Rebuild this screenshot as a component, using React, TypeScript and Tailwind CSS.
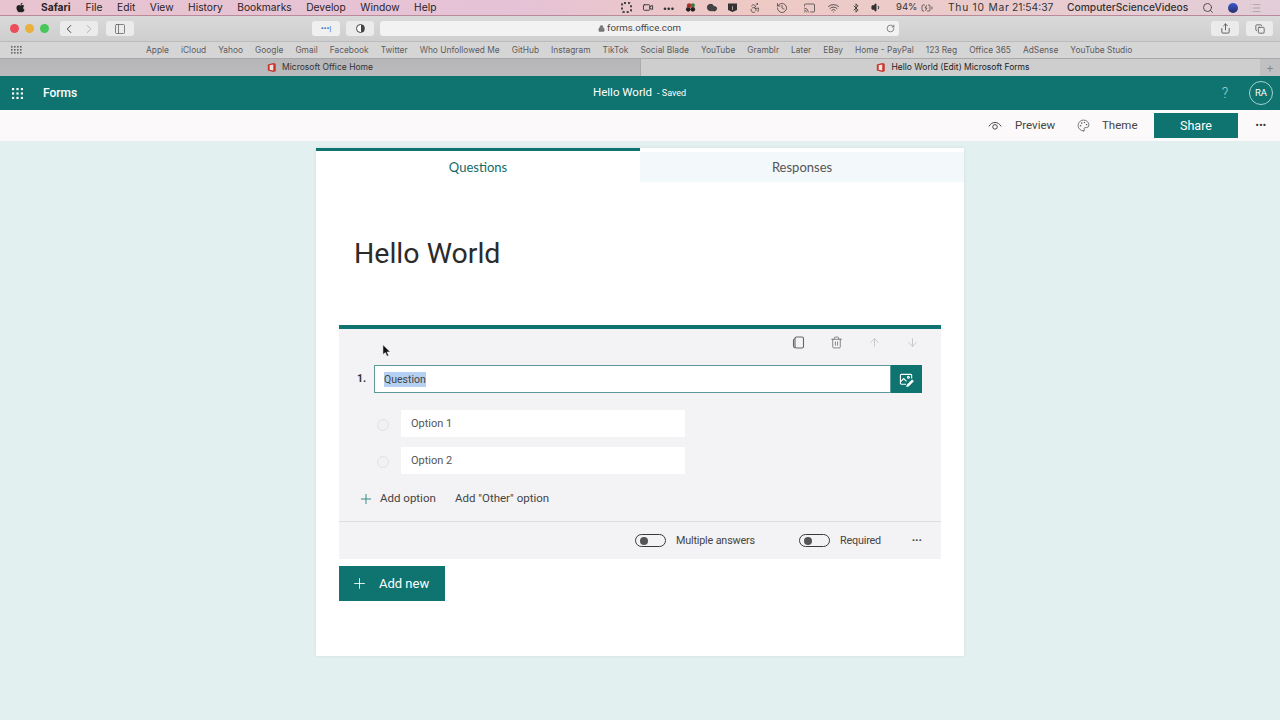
import React from "react";
import {
  ArrowDown, ArrowUp, ChevronLeft, ChevronRight, Copy, History, Lock, Palette, Plus, RotateCw, Search, Share, Trash2, Volume1, Wifi, PanelLeft, Video, Accessibility, Cast, BatteryCharging, List, Cloud, Bluetooth,
} from "lucide-react";
import { FaApple } from "react-icons/fa";

const menus = ["File", "Edit", "View", "History", "Bookmarks", "Develop", "Window", "Help"];
const bookmarks = ["Apple", "iCloud", "Yahoo", "Google", "Gmail", "Facebook", "Twitter", "Who Unfollowed Me", "GitHub", "Instagram", "TikTok", "Social Blade", "YouTube", "Gramblr", "Later", "EBay", "Home - PayPal", "123 Reg", "Office 365", "AdSense", "YouTube Studio"];

function Waffle({ className }: { className: string }) {
  const dots = [];
  for (let y = 0; y < 3; y++) for (let x = 0; x < 3; x++) dots.push(<rect key={x + "-" + y} x={x * 4.5} y={y * 4.5} width="2.2" height="2.2" />);
  return <svg viewBox="0 0 11.2 11.2" className={className} fill="currentColor">{dots}</svg>;
}

function SmallGrid() {
  const dots = [];
  for (let y = 0; y < 3; y++) for (let x = 0; x < 4; x++) dots.push(<rect key={x + "-" + y} x={x * 3} y={y * 3} width="1.6" height="1.6" />);
  return <svg viewBox="0 0 11 8" className="ml-[11px] h-[8px] w-[11px] text-[#666]" fill="currentColor">{dots}</svg>;
}

function OfficeLogo() {
  return (
    <svg viewBox="0 0 12 12" className="h-[11px] w-[10px]">
      <path d="M1 2.5 7.5 0.5 10.5 1.5V10.5L7.5 11.5 1 9.5Z" fill="#c9372c" />
      <path d="M3.2 3.4 7.5 2.4V9.6L3.2 8.6Z" fill="#efe3e0" />
    </svg>
  );
}

function Toggle({ label }: { label: string }) {
  return (
    <div className="flex items-center gap-[10px]">
      <div className="flex h-[13px] w-[31px] items-center rounded-full border border-[#3a3a3a] pl-[4px]">
        <div className="h-[8px] w-[8px] rounded-full bg-[#555]" />
      </div>
      <span className="pt-[1px] text-[10.75px] tracking-[-0.15px] text-[#444]">{label}</span>
    </div>
  );
}

function Option({ label }: { label: string }) {
  return (
    <div className="flex items-center">
      <div className="ml-[38px] mt-[3px] h-[12px] w-[12px] rounded-full border border-[#e2e1e3] bg-[#f1f0f2]" />
      <div className="ml-[12px] flex h-[27px] w-[284px] items-center bg-white pl-[10px] pt-[1px] text-[11px] text-[#555]">{label}</div>
    </div>
  );
}

export default function App() {
  return (
    <div className="relative flex h-[720px] w-[1280px] flex-col overflow-hidden bg-[#e3f0f0] font-['Roboto',sans-serif]">
      {/* macOS menu bar */}
      <div className="flex h-[15px] items-center bg-[linear-gradient(90deg,#e8c4d0_0%,#e5c2d6_40%,#eec9c4_58%,#eccbc9_70%,#e2cdd8_100%)] font-['Inter',sans-serif] text-[10.25px] text-[#2a2226]">
        <FaApple className="ml-[15px] h-[11px] w-[11px] text-[#222]" />
        <span className="ml-[15px] font-bold">Safari</span>
        <div className="ml-[15px] flex gap-[14.5px]">
          {menus.map((m) => <span key={m}>{m}</span>)}
        </div>
        <div className="ml-auto flex items-center text-[#333]">
          <div className="h-[11px] w-[11px] rounded-[3px] border-[2px] border-dotted border-[#444]" />
          <Video className="ml-[10px] h-[11px] w-[12px]" />
          <span className="ml-[9px] w-[12px] text-[8px] font-bold leading-none">•••</span>
          <svg viewBox="0 0 12 12" className="ml-[10px] h-[11px] w-[12px]">
            <circle cx="3" cy="8" r="2.5" fill="#222" />
            <circle cx="8" cy="8" r="2.5" fill="#222" />
            <circle cx="4" cy="4" r="2.6" fill="#a8302c" />
            <circle cx="8" cy="3.5" r="2.2" fill="#3d7a3a" />
          </svg>
          <Cloud className="ml-[9px] h-[11px] w-[12px]" fill="#444" />
          <svg viewBox="0 0 11 11" className="ml-[9px] h-[11px] w-[11px]"><path d="M1 1.5H10V8L5.5 10 1 8Z" fill="#333" /><path d="M5.5 4v4" stroke="#e9c9c9" strokeWidth="0.7" /></svg>
          <Accessibility className="ml-[11px] h-[12px] w-[12px]" strokeWidth={1.4} />
          <History className="ml-[15px] h-[12px] w-[12px]" strokeWidth={1.4} />
          <Cast className="ml-[15px] h-[12px] w-[13px]" strokeWidth={1.4} />
          <Wifi className="ml-[11px] h-[12px] w-[13px]" strokeWidth={1.6} />
          <Bluetooth className="ml-[11px] h-[10px] w-[10px]" />
          <Volume1 className="ml-[10px] h-[11px] w-[11px]" fill="#333" />
          <span className="ml-[14px] w-[18px] whitespace-nowrap text-[9.5px]">94%</span>
          <BatteryCharging className="ml-[4px] h-[12px] w-[18px]" strokeWidth={1.4} />
          <span className="ml-[12px] w-[57px] whitespace-nowrap tracking-[0.75px]">Thu 10 Mar</span>
          <span className="ml-[7px] w-[45px] whitespace-nowrap">21:54:37</span>
          <span className="ml-[10px] w-[124px] whitespace-nowrap font-medium">ComputerScienceVideos</span>
          <Search className="ml-[11px] h-[12px] w-[12px]" strokeWidth={1.6} />
          <div className="ml-[14px] h-[10px] w-[10px] rounded-full bg-gradient-to-b from-[#3a5bd0] to-[#2b2f6b]" />
          <List className="ml-[11px] mr-[18px] h-[12px] w-[13px] text-[#999]" strokeWidth={1.4} />
        </div>
      </div>

      {/* Safari toolbar */}
      <div className="flex h-[26px] items-center border-t border-[#b98a9a] bg-gradient-to-b from-[#dbdada] to-[#cfcecf]">
        <div className="ml-[10px] h-[9px] w-[9px] rounded-full bg-[#ec4d5a]" />
        <div className="ml-[6px] h-[9px] w-[9px] rounded-full bg-[#e9b03c]" />
        <div className="ml-[6px] h-[9px] w-[9px] rounded-full bg-[#47c65a]" />
        <div className="ml-[11px] flex h-[15px] w-[38px] items-center justify-between rounded-[3px] bg-[#ecebec] px-[2px]">
          <ChevronLeft className="h-[14px] w-[14px] text-[#333]" strokeWidth={1.6} />
          <ChevronRight className="h-[14px] w-[14px] text-[#aaa]" strokeWidth={1.5} />
        </div>
        <div className="ml-[8px] flex h-[15px] w-[28px] items-center justify-center rounded-[3px] bg-[#ecebec]">
          <PanelLeft className="h-[12px] w-[12px] text-[#555]" strokeWidth={1.4} />
        </div>
        <div className="ml-[178px] flex h-[15px] w-[28px] items-center justify-center rounded-[3px] bg-[#f1f0f1] text-[8px] font-bold leading-none text-[#3a78c4]">•••|</div>
        <div className="ml-[6px] flex h-[15px] w-[28px] items-center justify-center rounded-[3px] bg-[#ecebec]">
          <div className="h-[9px] w-[9px] rounded-full border border-[#444] bg-gradient-to-r from-white from-50% to-[#444] to-50%" />
        </div>
        <div className="relative ml-[6px] flex h-[15px] w-[519px] items-center justify-center rounded-[3px] bg-[#f3f2f3] text-[9.7px] text-[#444]">
          <Lock className="mr-[2px] h-[7px] w-[7px] text-[#777]" fill="#777" />
          <span>forms.office.com</span>
          <RotateCw className="absolute right-[4px] h-[9px] w-[9px] text-[#666]" />
        </div>
        <div className="ml-[312px] flex h-[15px] w-[28px] items-center justify-center rounded-[3px] bg-[#ecebec]">
          <Share className="h-[11px] w-[11px] text-[#555]" />
        </div>
        <div className="ml-[7px] flex h-[15px] w-[27px] items-center justify-center rounded-[3px] bg-[#ecebec]">
          <Copy className="h-[10px] w-[10px] text-[#555]" />
        </div>
      </div>

      {/* Bookmarks */}
      <div className="flex h-[17px] items-center border-t border-[#bdbcbd] bg-[#d6d5d6] font-['Inter',sans-serif] text-[8.4px] text-[#5c5c5e]">
        <SmallGrid />
        <div className="ml-[124px] flex gap-[12px]">
          {bookmarks.map((b) => <span key={b}>{b}</span>)}
        </div>
      </div>

      {/* Tabs */}
      <div className="flex h-[18px] items-center border-t border-[#a9a8aa] bg-[#b9b8ba] font-['Inter',sans-serif] text-[8.5px] text-[#333]">
        <div className="flex h-full w-[640px] items-center justify-center gap-[5px] bg-gradient-to-b from-[#b6b5b7] to-[#bcbbbd]">
          <OfficeLogo />
          <span>Microsoft Office Home</span>
        </div>
        <div className="flex h-full w-[620px] items-center justify-center gap-[5px] border-l border-[#aaa] bg-[#cfcecf] pl-[5px] text-[#222]">
          <OfficeLogo />
          <span>Hello World (Edit) Microsoft Forms</span>
        </div>
        <div className="flex h-full w-[20px] items-center justify-center bg-[#c0bfc1] text-[12px] text-[#888]">+</div>
      </div>

      {/* Forms header */}
      <div className="relative flex h-[34px] items-center bg-[#0f7370] text-white">
        <Waffle className="ml-[12px] h-[11px] w-[11px]" />
        <span className="ml-[20px] text-[12px] font-medium">Forms</span>
        <div className="absolute left-[593px] flex items-baseline">
          <span className="text-[11.5px]">Hello World</span>
          <span className="ml-[5px] text-[9px]">- Saved</span>
        </div>
        <span className="ml-auto text-[14px] font-light text-[#a9d2d0]">?</span>
        <div className="ml-[21px] mr-[7px] flex h-[24px] w-[24px] items-center justify-center rounded-full border border-[#a9d2d0] text-[9.5px]">RA</div>
      </div>

      {/* Command bar */}
      <div className="flex h-[31px] items-center justify-end bg-[#fcf9fa] text-[11.5px] text-[#444]">
        <svg viewBox="0 0 16 16" className="h-[14px] w-[14px]" fill="none" stroke="#444" strokeWidth="1.1">
          <path d="M1 8.5C3 5.2 5.3 4 8 4s5 1.2 7 4.5" />
          <circle cx="8" cy="9" r="2.6" />
        </svg>
        <span className="ml-[13px] w-[39px] whitespace-nowrap pt-[1px]">Preview</span>
        <Palette className="ml-[23px] h-[13px] w-[13px]" strokeWidth={1.3} />
        <span className="ml-[12px] w-[35px] whitespace-nowrap pt-[1px]">Theme</span>
        <div className="ml-[17px] flex h-[25px] w-[84px] items-center justify-center bg-[#0f7370] pt-[1px] text-[12.5px] text-white">Share</div>
        <span className="ml-[16px] mr-[12px] w-[14px] text-center text-[9px] font-bold leading-none tracking-[0.5px] text-[#333]">•••</span>
      </div>

      {/* Page */}
      <div className="flex flex-1 flex-col items-center pt-[7px]">
        <div className="flex h-[508px] w-[648px] flex-col bg-white shadow-[0_0_3px_rgba(0,0,0,0.08)]">
          <div className="flex">
            <div className="flex h-[34px] w-[324px] items-center justify-center border-t-[3px] border-[#0f7370] bg-white pt-[3px] font-['Lato',sans-serif] text-[13px] text-[#136a68]">Questions</div>
            <div className="mt-[4px] flex h-[30px] w-[324px] items-center justify-center bg-[#f3f8fb] pt-[1px] font-['Lato',sans-serif] text-[13px] text-[#555]">Responses</div>
          </div>
          <h1 className="ml-[38px] mt-[52px] text-[28.5px] leading-[40px] text-[#2b2b2b]">Hello World</h1>

          <div className="mx-[23px] mt-[51px] flex h-[234px] flex-col border-t-[4px] border-[#0f7370] bg-[#f3f2f4]">
            <div className="flex h-[27px] items-center justify-end pr-[22px] text-[#666]">
              <svg viewBox="0 0 13 13" className="h-[13px] w-[13px]" fill="none" stroke="#666" strokeWidth="1.1">
                <rect x="3" y="1" width="8.5" height="11" rx="1.5" />
                <path d="M3 2.5C2 2.8 1.5 3.5 1.5 4.5V10c0 1 .5 1.7 1.5 2" />
              </svg>
              <Trash2 className="ml-[25px] h-[13px] w-[13px]" strokeWidth={1.4} />
              <ArrowUp className="ml-[25px] h-[13px] w-[13px] text-[#bbb]" strokeWidth={1.4} />
              <ArrowDown className="ml-[25px] h-[13px] w-[13px] text-[#bbb]" strokeWidth={1.4} />
            </div>
            <div className="mt-[9px] flex items-center pr-[19px]">
              <span className="ml-[18px] w-[17px] text-[10.5px] font-bold text-[#333]">1.</span>
              <div className="flex h-[28px] flex-1 items-center border border-[#5b9a98] bg-white pl-[9px] pt-[1px] text-[10.5px] text-[#444]">
                <span className="bg-[#b4d0f2]">Question</span>
              </div>
              <div className="flex h-[28px] w-[31px] items-center justify-center bg-[#0f7370]">
                <svg viewBox="0 0 16 16" className="h-[15px] w-[15px]" fill="none" stroke="white" strokeWidth="1.2">
                  <path d="M7.5 13H2.5a1 1 0 0 1-1-1V3.5a1 1 0 0 1 1-1h10a1 1 0 0 1 1 1V7" />
                  <path d="M1.5 10.5 5 7l3 3" />
                  <circle cx="10" cy="5.5" r="1" />
                  <path d="M9 13.8 14 8.8l1 1-5 5-1.5.3Z" fill="white" />
                </svg>
              </div>
            </div>
            <div className="mt-[17px] flex flex-col gap-[10px]">
              <Option label="Option 1" />
              <Option label="Option 2" />
            </div>
            <div className="mt-[10px] flex h-[28px] items-center pt-[1px] text-[11.5px] text-[#444]">
              <Plus className="ml-[19px] h-[16px] w-[16px] text-[#0f7370]" strokeWidth={1.2} />
              <span className="ml-[6px] w-[55px] whitespace-nowrap">Add option</span>
              <span className="ml-[20px] whitespace-nowrap">Add "Other" option</span>
            </div>
            <div className="mt-auto flex h-[38px] items-center justify-end border-t border-[#dddcde] pr-[18px]">
              <Toggle label="Multiple answers" />
              <div className="ml-[44px]"><Toggle label="Required" /></div>
              <span className="ml-[30px] w-[12px] text-center text-[8px] font-bold leading-none tracking-[0.5px] text-[#444]">•••</span>
            </div>
          </div>

          <div className="ml-[23px] mt-[7px] flex h-[35px] w-[106px] items-center bg-[#0f7370] text-[13px] text-white">
            <Plus className="ml-[12px] h-[17px] w-[17px]" strokeWidth={1.2} />
            <span className="ml-[11px] pt-[1px]">Add new</span>
          </div>
        </div>
      </div>

      {/* Mouse cursor */}
      <svg viewBox="0 0 12 16" className="absolute left-[382px] top-[344px] h-[13px] w-[10px]">
        <path d="M1 1V13L4 10.5 6 15 8 14 6 9.7H10Z" fill="#111" stroke="#fff" strokeWidth="0.6" />
      </svg>
    </div>
  );
}
